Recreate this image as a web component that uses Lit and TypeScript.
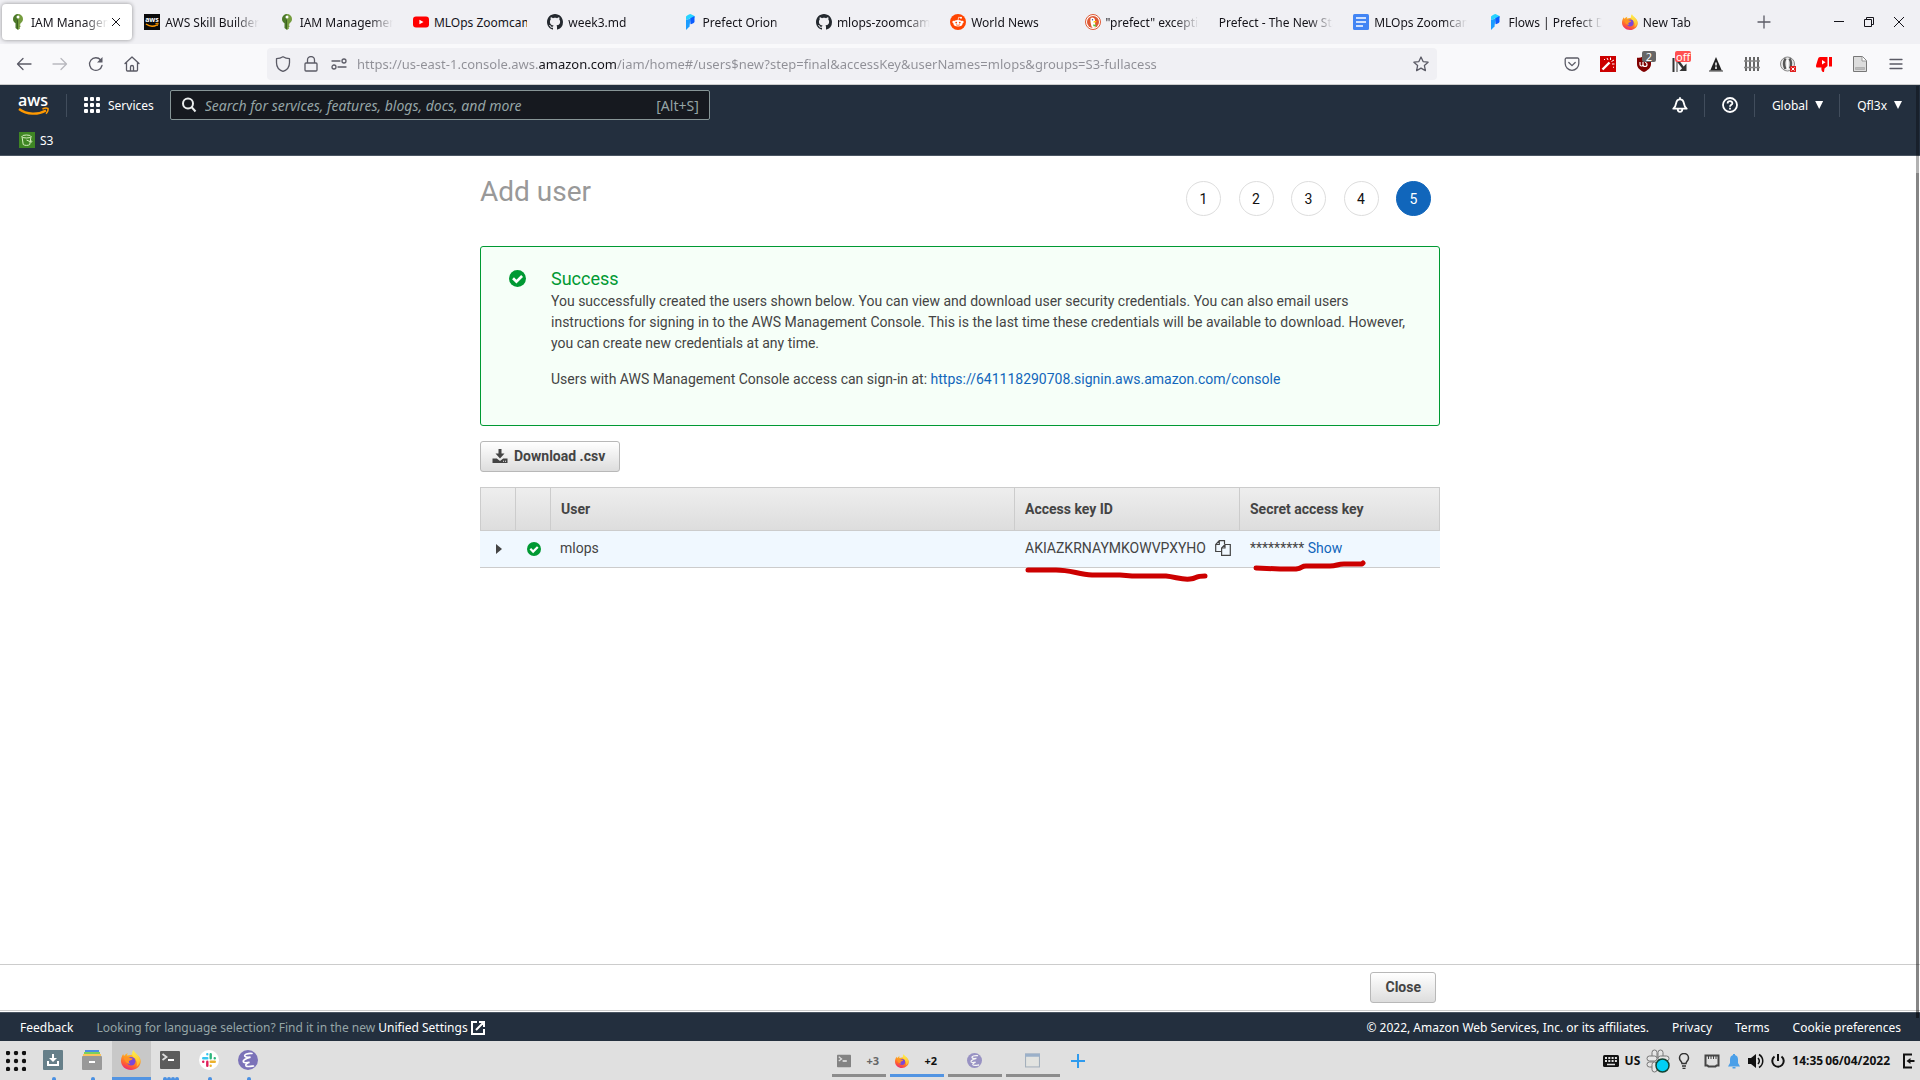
import { LitElement, html, css, svg, nothing, TemplateResult } from "lit";
import { customElement, state } from "lit/decorators.js";
import { classMap } from "lit/directives/class-map.js";

/* ---------- favicons ---------- */

const keyIcon = html`<svg class="i16" viewBox="0 0 16 16" aria-hidden="true">
  <path fill="#4d7a2a" d="M8 0a5 5 0 0 0-5 5c0 2 1 3.400 2.500 4.200V14L8 16z" />
  <path fill="#759c3e" d="M8 0a5 5 0 0 1 5 5c0 2-1 3.400-2.500 4.200v1l-1 .8 1 .8v1l-1 .8.700.7L8 16z" />
  <circle cx="8" cy="3" r="1.500" fill="#fff" />
  <path fill="#3c6020" d="M7 6h1v9H7z" />
</svg>`;

const awsIcon = html`<svg class="i16" viewBox="0 0 16 16" aria-hidden="true">
  <rect width="16" height="16" fill="#0b0b0b" />
  <text x="8" y="8" text-anchor="middle" font-family="Open Sans, sans-serif" font-weight="700" font-size="7" fill="#fff">aws</text>
  <path d="M2 10c3.500 2.600 8 2.600 11 .8" fill="none" stroke="#f90" stroke-width="1.500" />
  <path d="M11.500 9.500l2.700-.3-.8 2.600" fill="none" stroke="#f90" />
</svg>`;

const youtubeIcon = html`<svg class="i16" viewBox="0 0 16 16" aria-hidden="true">
  <rect y="2.500" width="16" height="11" rx="3" fill="#f00" />
  <path d="M6.400 5.700v4.600L10.500 8z" fill="#fff" />
</svg>`;

const githubIcon = html`<svg class="i16" viewBox="0 0 16 16" aria-hidden="true">
  <path fill="#24292f" d="M8 0C3.580 0 0 3.580 0 8c0 3.540 2.290 6.530 5.470 7.590.4.070.550-.170.550-.380 0-.190-.010-.820-.010-1.490-2.010.370-2.530-.490-2.690-.940-.090-.230-.480-.940-.820-1.130-.280-.150-.680-.520-.010-.530.630-.010 1.080.580 1.230.820.720 1.210 1.870.870 2.330.660.070-.520.280-.870.510-1.070-1.780-.2-3.640-.890-3.640-3.950 0-.870.310-1.590.820-2.150-.080-.2-.360-1.020.080-2.120 0 0 .670-.210 2.200.820.640-.180 1.320-.270 2-.270s1.360.090 2 .270c1.530-1.040 2.200-.820 2.200-.820.440 1.100.160 1.920.080 2.120.510.560.820 1.270.820 2.150 0 3.070-1.870 3.750-3.650 3.950.290.250.540.730.540 1.480 0 1.070-.010 1.930-.010 2.200 0 .210.150.460.550.380A8.010 8.010 0 0 0 16 8c0-4.420-3.580-8-8-8z" />
</svg>`;

const prefectIcon = html`<svg class="i16" viewBox="0 0 16 16" aria-hidden="true">
  <path fill="#27d3ff" d="M4 2.500C5.500 1 7.500 0 8.500 0l4 2v2L8 4.500 4 6z" />
  <path fill="#0b5dff" d="M8 4.500L12.500 2v6c-1 1.500-2.500 2-4 2.200z" />
  <path fill="#1b9cff" d="M4 6l4.500-1.500-1 8L4 16z" />
</svg>`;

const redditIcon = html`<svg class="i16" viewBox="0 0 16 16" aria-hidden="true">
  <circle cx="8" cy="8" r="8" fill="#ff4500" />
  <ellipse cx="8" cy="9.200" rx="4.600" ry="3.300" fill="#fff" />
  <circle cx="3.600" cy="7.900" r="1.200" fill="#fff" /><circle cx="12.400" cy="7.900" r="1.200" fill="#fff" />
  <circle cx="11" cy="3.700" r="1" fill="#fff" />
  <path d="M8 6.200l.7-3 2.300.5" fill="none" stroke="#fff" stroke-width=".7" />
  <circle cx="6.200" cy="8.600" r=".9" fill="#ff4500" /><circle cx="9.800" cy="8.600" r=".9" fill="#ff4500" />
  <path d="M6 10.600c1.200.9 2.800.9 4 0" fill="none" stroke="#ff4500" stroke-width=".7" />
</svg>`;

const duckIcon = html`<svg class="i16" viewBox="0 0 16 16" aria-hidden="true">
  <circle cx="8" cy="8" r="7.500" fill="#fff" stroke="#de5833" />
  <circle cx="8" cy="8" r="6" fill="#de5833" />
  <path d="M5.500 4.500c1-1.500 4-1.200 4.500 1.500.3 2-.2 5 .8 7.300-1.500.8-3 .7-3.800.2C6 11 5 7 5.500 4.500z" fill="#fff" />
  <path d="M8.500 7.500c1.500-.6 3-.5 3 0s-1.500.9-3 1.200z" fill="#fc0" />
  <path d="M8 10.500l3 .2v1.800l-2.500-.3z" fill="#5bc236" />
  <circle cx="7.500" cy="5.700" r=".7" fill="#2d4f8e" />
</svg>`;

const docsIcon = html`<svg class="i16" viewBox="0 0 16 16" aria-hidden="true">
  <rect width="16" height="16" rx="1.500" fill="#4285f4" />
  <path fill="#fff" d="M3 3.200h10v1.600H3zM3 7.200h10v1.600H3zM3 11.200h7v1.600H3z" />
</svg>`;

const firefoxIcon = html`<svg class="fill" viewBox="0 0 20 20" aria-hidden="true">
  <defs>
    <linearGradient id="ff-body" x1=".8" y1="0" x2=".3" y2="1">
      <stop offset="0" stop-color="#ffd53d" /><stop offset=".4" stop-color="#ff9a1f" />
      <stop offset=".75" stop-color="#ff5a36" /><stop offset="1" stop-color="#e8257c" />
    </linearGradient>
    <linearGradient id="ff-flame" x1="0" y1="0" x2="0" y2="1">
      <stop offset="0" stop-color="#fff04d" /><stop offset="1" stop-color="#ffb52a" />
    </linearGradient>
  </defs>
  <path fill="url(#ff-body)" d="M2.200 4c.2 1 .6 1.500 1 1.900C3.900 4.700 5.500 3.400 7 3.300 6.200 4 6 5 6.200 5.600L15 4c3 2 4.700 4 4.700 7.200C19.700 16 15.500 20 10 20S0 16 0 11C0 8.500.9 5.800 2.200 4z" />
  <path fill="url(#ff-flame)" d="M12.500 0c.6 3 6.500 5.200 6.500 10.500 0 3-1.600 5-3.600 6.200 1.200-3 .4-7-2.400-9C10.500 6 10.500 2.500 12.500 0z" />
  <circle cx="10.200" cy="11.300" r="4.300" fill="#7b48d8" />
  <path fill="#ff9423" d="M2.500 7.500c2-1.300 5-.8 6.200.3 1 .9 2.500.2 2.800.8.300 1-1.500 1.700-2.700 2-1.300.4-1.400 2.200.4 3-3 .6-5.500-1.800-6.700-6.100z" />
</svg>`;

/* ---------- toolbar icons ---------- */

const line = (d: string) => html`<svg class="i16 line" viewBox="0 0 16 16" aria-hidden="true"><path d=${d} /></svg>`;

const backIcon = line("M15 8H2M7 2.500L1.500 8 7 13.500");
const forwardIcon = line("M1 8h13M9 2.500L14.500 8 9 13.500");
const homeIcon = line("M1 7.500L8 1l7 6.500M2.500 6.500V14a1 1 0 0 0 1 1h9a1 1 0 0 0 1-1V6.500M6.500 15v-4a1.500 1.500 0 0 1 3 0v4");
const shieldIcon = line("M8 .7C6 2 4 2.600 1.500 2.700v4C1.500 11 4 14 8 15.400 12 14 14.500 11 14.500 6.700v-4C12 2.600 10 2 8 .7z");
const lockIcon = line("M3 7h10a1 1 0 0 1 1 1v6a1 1 0 0 1-1 1H3a1 1 0 0 1-1-1V8a1 1 0 0 1 1-1zM4.500 7V4a3.500 3.500 0 0 1 7 0v3");
const permsIcon = line("M1 5h8M15 11H7M11 5a2 2 0 1 0 4 0 2 2 0 1 0-4 0M1 11a2 2 0 1 0 4 0 2 2 0 1 0-4 0");
const starIcon = line("M8 1l2.100 4.600 5 .6-3.700 3.400 1 5L8 12.100l-4.400 2.500 1-5L.900 6.200l5-.6z");
const pocketIcon = line("M2.500 2h11a1.300 1.300 0 0 1 1.300 1.300V7.500a6.800 6.800 0 0 1-13.600 0V3.300A1.300 1.300 0 0 1 2.500 2zM4.800 6.500L8 9.600l3.200-3.100");
const menuIcon = line("M2 3.500h12M2 8h12M2 12.500h12");
const plusIcon = line("M8 2v12M2 8h12");
const minIcon = html`<svg class="i16 dark" viewBox="0 0 16 16" aria-hidden="true"><path d="M3 7.500h10" /></svg>`;
const restoreIcon = html`<svg class="i16 dark" viewBox="0 0 16 16" aria-hidden="true"><path d="M3.500 5.500h7v7h-7zM5.500 5.500v-2h7v7h-2" /></svg>`;
const closeIcon = html`<svg class="i16 dark" viewBox="0 0 16 16" aria-hidden="true"><path d="M3 3l10 10M13 3L3 13" /></svg>`;
const tabCloseIcon = html`<svg class="i16 dark" viewBox="0 0 16 16" aria-hidden="true"><path d="M4 4l8 8M12 4l-8 8" /></svg>`;

const reloadIcon = html`<svg class="i16 line" viewBox="0 0 16 16" aria-hidden="true">
  <path d="M14 9.500A6.300 6.300 0 1 1 12.700 4" /><path d="M14.500 1v5.500H9z" fill="#5b5b66" stroke="none" />
</svg>`;

const wandIcon = html`<svg class="i16" viewBox="0 0 16 16" aria-hidden="true">
  <rect width="16" height="16" fill="#c00" />
  <path d="M2.500 13.500l7-7" stroke="#fff" stroke-width="2.400" />
  <path d="M7 2l1 2M10.500 1.500v2.500M14 4l-2.500 1.500M12 8h2.500M4 3.500h1M13 11l1 .5" stroke="#fff" />
</svg>`;
const ublockIcon = html`<svg class="i16" viewBox="0 0 16 16" aria-hidden="true">
  <path fill="#800000" d="M8 0c2 1.300 4.500 1.800 7 1.800V8c0 4-3.500 6.500-7 8-3.500-1.500-7-4-7-8V1.800C3.500 1.800 6 1.300 8 0z" />
  <path d="M4 6v2.500a1.500 1.500 0 0 0 3 0V6M7 8.500a2 2 0 1 0 2-2" fill="none" stroke="#fff" stroke-width="1.200" />
</svg>`;
const arrowIcon = html`<svg class="i16" viewBox="0 0 16 16" aria-hidden="true">
  <path d="M1.500 2v14" stroke="#333" stroke-width="2" /><path d="M5 2v14" stroke="#999" stroke-width="2" />
  <path d="M6 5l6 8" fill="none" stroke="#333" stroke-width="2.400" /><path d="M14.500 7.500V15H7.500z" fill="#333" />
</svg>`;
const warnIcon = html`<svg class="i16" viewBox="0 0 16 16" aria-hidden="true">
  <path d="M8 1l6 14H2z" fill="#222" /><path d="M1 15h14" stroke="#777" stroke-width="1.500" />
  <path d="M8 6.500v3M8 10.500v2.500" stroke="#fff" stroke-width="1.500" />
</svg>`;
const fenceIcon = html`<svg class="i16" viewBox="0 0 16 16" aria-hidden="true">
  <path d="M2 1v14M6 1v14M10 1v14M14 1v14" stroke="#666" stroke-width="2" /><path d="M0 5h16M0 11.500h16" stroke="#888" stroke-width="1.300" />
</svg>`;
const maskIcon = html`<svg class="i16" viewBox="0 0 16 16" aria-hidden="true">
  <circle cx="7.500" cy="8" r="7" fill="#e8e8e8" stroke="#888" />
  <path d="M5.500 2.500C4 5 3 8 5.500 13M9.500 2.500c2 3 2 6 .5 10" fill="none" stroke="#555" stroke-width="2.400" />
  <path d="M7.500 4v9" stroke="#fff" stroke-width="1.500" />
  <rect x="10" y="10" width="6" height="6" fill="#e02020" /><path d="M11.500 11.500l3 3M14.500 11.500l-3 3" stroke="#fff" />
</svg>`;
const dislikeIcon = html`<svg class="i16" viewBox="0 0 16 16" aria-hidden="true">
  <path fill="#f00" d="M4 1h7.500v9L8.500 12.500 8 16c-2 0-3-1.500-2.500-4.500H1.500C0 11.500-.3 10 .3 8.500L2 3c.4-1.200 1-2 2-2zM13 1h3v9.500h-3z" />
  <path fill="#fff" d="M6 4v4.500L9.500 6.200z" />
</svg>`;
const pageIcon = html`<svg class="i16" viewBox="0 0 16 16" aria-hidden="true">
  <path d="M1.500.5h9l4 4v11h-13z" fill="#ddd" stroke="#777" /><path d="M10 .5v4.500h4.500" fill="#fff" stroke="#999" />
  <path d="M3.500 11.500h9v2h-9z" fill="#bbb" stroke="#999" stroke-width=".5" />
</svg>`;

/* ---------- console icons ---------- */

const gridIcon = html`<svg class="i16" viewBox="0 0 16 16" fill="#fff" aria-hidden="true">
  ${[0, 6, 12].map((y) => [0, 6, 12].map((x) => svg`<rect x=${x} y=${y} width="4" height="4" rx="1" />`))}
</svg>`;
const searchIcon = html`<svg class="i16" viewBox="0 0 16 16" fill="none" stroke="#eaeded" stroke-width="2" aria-hidden="true">
  <circle cx="7" cy="6.500" r="5" /><path d="M10.500 10l4 4.500" />
</svg>`;
const bellIcon = html`<svg class="i16" viewBox="0 0 16 16" fill="none" stroke="#fff" stroke-width="1.800" stroke-linejoin="round" aria-hidden="true">
  <path d="M8 .3v2M1.300 11.700C3.500 10 3.800 8.500 4.200 6 4.600 3.500 6 2.300 8 2.300s3.400 1.200 3.800 3.700c.4 2.500.7 4 2.900 5.700zM5.700 12c0 3.800 4.600 3.800 4.600 0" />
</svg>`;
const helpIcon = html`<svg class="i16" viewBox="0 0 16 16" fill="none" stroke="#fff" stroke-width="1.800" aria-hidden="true">
  <circle cx="8" cy="8" r="7" /><path d="M5.600 6.500C5.600 3.400 10.400 3.500 10.400 6.200 10.400 7.900 8 7.800 8 9.800M8 10.800v1.700" />
</svg>`;
const s3Icon = html`<svg class="i16" viewBox="0 0 16 16" fill="none" stroke="#d8f0c0" aria-hidden="true">
  <rect width="16" height="16" fill="#3f8624" stroke="none" />
  <ellipse cx="7.500" cy="4.500" rx="4.500" ry="1.500" /><path d="M3 4.500l1.200 8c1.500 1.200 5.200 1.200 6.600 0l1.200-8M7.500 8l4.500 2c1.500.5 1-1-.5-2" />
</svg>`;
const checkIcon = html`<svg class="fill" viewBox="0 0 16 16" aria-hidden="true">
  <circle cx="8" cy="8" r="8" fill="#093" /><path d="M3.800 7.800L7 11l5.300-5.300" fill="none" stroke="#fff" stroke-width="2.500" />
</svg>`;
const downloadIcon = html`<svg class="i16" viewBox="0 0 16 16" aria-hidden="true">
  <path fill="#444" d="M6.500 0h3v4.500h3L8 9.500 3.500 4.500h3zM.500 9.500h4.300L8 12l3.200-2.500h4.300V14H.500z" />
  <path fill="#eee" d="M11 11.800h1v1h-1zM13 11.800h1v1h-1z" />
</svg>`;
const copyIcon = html`<svg class="i16" viewBox="0 0 16 16" fill="none" stroke="#444" stroke-width="1.200" aria-hidden="true">
  <path d="M6.500 11.500H.700v-7L4.300.700h5.200V4M.700 4.500h3.600V.700" /><path d="M10 4.500h5.300v10.800H6.600V8zM6.600 8H10V4.500" />
</svg>`;
const externalIcon = html`<svg class="fill" viewBox="0 0 14 14" fill="none" stroke="#fff" stroke-width="2" aria-hidden="true">
  <path d="M6 1H1v12h12V8M8 1h5v5M13 1L5 9" />
</svg>`;

/* ---------- desktop panel icons ---------- */

const trayDownload = html`<svg class="fill" viewBox="0 0 20 20" aria-hidden="true">
  <rect width="20" height="20" rx="1" fill="#667f89" /><path d="M9 4h2v4h3l-4 4-4-4h3zM4 11h2v3h8v-3h2v5H4z" fill="#fff" />
</svg>`;
const filesIcon = html`<svg class="fill" viewBox="0 0 20 20" aria-hidden="true">
  <path d="M3 0h14v3H3z" fill="#4a90e2" /><path d="M2 2h16v3H2z" fill="#7dd05a" /><path d="M1 4h18v4H1z" fill="#fbc55c" />
  <rect y="6" width="20" height="14" rx="1" fill="#999" /><path d="M7 11h6v2H7z" fill="#fff" />
</svg>`;
const terminalIcon = html`<svg class="fill" viewBox="0 0 20 20" aria-hidden="true">
  <rect y="1" width="20" height="18" rx="1" fill="#5c5c5c" />
  <path d="M2.500 4l4 3-4 3" fill="none" stroke="#ddd" stroke-width="1.800" /><path d="M8 9h6v2H8z" fill="#fff" />
</svg>`;
const slackIcon = html`<svg class="fill" viewBox="0 0 20 20" fill="none" stroke-width="2.400" stroke-linecap="round" aria-hidden="true">
  <circle cx="10" cy="10" r="10" fill="#fff" />
  <path stroke="#36c5f0" d="M8.300 4.200v.1M4.200 8.300h4.100" /><path stroke="#2eb67d" d="M11.700 4.200v4.100M15.800 8.300h-.1" />
  <path stroke="#ecb22e" d="M11.700 15.800v-.1M15.800 11.700h-4.100" /><path stroke="#e01e5a" d="M8.300 15.800v-4.100M4.200 11.700h.1" />
</svg>`;
const emacsIcon = html`<svg class="fill" viewBox="0 0 20 20" aria-hidden="true">
  <circle cx="10" cy="10" r="10" fill="#7b72b8" />
  <path d="M14 3.500C10 3 6 4.500 6.800 6.200c.7 1.300 3.200 1.300 5.700 1C8.500 8.500 4.500 10 5.500 12c.8 1.200 3.500.8 6 .3-2.500 1-4.500 2.200-3.500 3.500 1.200 1.300 4.500.6 7.500.2" fill="none" stroke="#fff" stroke-width="1.700" stroke-linecap="round" />
</svg>`;
const windowIcon = html`<svg class="fill" viewBox="0 0 14 14" aria-hidden="true">
  <rect x=".5" y="1" width="13" height="12" fill="#e4e5e0" stroke="#8c9cae" /><path d="M0 .5h14v3H0z" fill="#7f9dc0" />
</svg>`;
const addIcon = html`<svg class="fill" viewBox="0 0 14 14" aria-hidden="true"><path d="M7 0v14M0 7h14" stroke="#2f9bee" stroke-width="2" /></svg>`;
const keyboardIcon = html`<svg class="i16" viewBox="0 0 16 16" aria-hidden="true">
  <rect y="2" width="16" height="12" rx="1.500" fill="#111" />
  <path d="M2 5h12M2 8h12" stroke="#e0e0e0" stroke-width="2" stroke-dasharray="2 1.300" /><path d="M4 11.500h8" stroke="#e0e0e0" stroke-width="1.500" />
</svg>`;
const slackTray = html`<svg class="fill" viewBox="0 0 24 24" aria-hidden="true">
  <g fill="#e6e6e6" stroke="#777">
    <rect x="6" y="1" width="5" height="10" rx="2.500" /><rect x="12" y="1" width="5" height="10" rx="2.500" />
    <rect x="1" y="7" width="10" height="5" rx="2.500" /><rect x="12" y="7" width="11" height="5" rx="2.500" />
    <rect x="1" y="13" width="10" height="5" rx="2.500" /><rect x="6" y="13" width="5" height="10" rx="2.500" />
  </g>
  <circle cx="16.500" cy="16.500" r="6.500" fill="#00d0f5" stroke="#143" stroke-width="1.500" />
</svg>`;
const bulbIcon = html`<svg class="i16" viewBox="0 0 16 16" fill="none" stroke="#333" stroke-width="1.500" aria-hidden="true">
  <path d="M6 10.500C6 8.500 3.500 8 3.500 5a4.500 4.500 0 0 1 9 0c0 3-2.500 3.500-2.500 5.500zM6 13h4M6.500 15.500h3" />
</svg>`;
const netIcon = html`<svg class="i16" viewBox="0 0 16 16" fill="none" stroke="#444" stroke-width="2" aria-hidden="true">
  <path d="M1.500 2.500h13v10h-2l-1 1h-7l-1-1h-2z" /><path d="M4.500 3v3M7 3v3M9.500 3v3M12 3v3" stroke-width="1" />
</svg>`;
const trayBell = html`<svg class="i16" viewBox="0 0 16 16" aria-hidden="true">
  <path fill="#4a9fe8" d="M7 1h2v1c2 .6 3 2.200 3 4.500V10l2 3.500H2L4 10V6.500C4 4.200 5 2.600 7 2zM6.500 14h3v1.500h-3z" />
</svg>`;
const volumeIcon = html`<svg class="i16" viewBox="0 0 16 16" aria-hidden="true">
  <path fill="#111" d="M0 5h3l5-4v14l-5-4H0z" /><path d="M10 5c1.500 1.700 1.500 4.300 0 6M11 1.500c5 3 5 10 0 13" fill="none" stroke="#111" stroke-width="1.500" />
</svg>`;
const powerIcon = html`<svg class="i16" viewBox="0 0 16 16" fill="none" stroke="#111" stroke-width="2" aria-hidden="true">
  <path d="M4.500 3.500a5.700 5.700 0 1 0 7 0M8 1v7" />
</svg>`;
const exitIcon = html`<svg class="i16" viewBox="0 0 16 16" fill="none" stroke="#111" stroke-width="2" aria-hidden="true">
  <path d="M12 1.500H4v13h8M14.500 8H9" /><path d="M6.500 8l4-3v6z" fill="#111" stroke="none" />
</svg>`;

interface Tab { title: string; icon?: TemplateResult; clip?: boolean }
interface Extension { label: string; icon: TemplateResult; badge?: string; alert?: boolean }
interface Launcher { label: string; icon: TemplateResult; windows: number; active?: boolean }
interface TaskGroup { label: string; icon: TemplateResult; more?: string; active?: boolean }
interface Credential { user: string; keyId: string; secret: string }

const tabs: Tab[] = [
  { title: "IAM Management Console", icon: keyIcon },
  { title: "AWS Skill Builder", icon: awsIcon },
  { title: "IAM Management Console", icon: keyIcon },
  { title: "MLOps Zoomcamp", icon: youtubeIcon, clip: true },
  { title: "week3.md", icon: githubIcon },
  { title: "Prefect Orion", icon: prefectIcon },
  { title: "mlops-zoomcamp", icon: githubIcon },
  { title: "World News", icon: redditIcon },
  { title: "\"prefect\" exception", icon: duckIcon },
  { title: "Prefect - The New Standard" },
  { title: "MLOps Zoomcamp", icon: docsIcon },
  { title: "Flows | Prefect Docs", icon: prefectIcon },
  { title: "New Tab", icon: firefoxIcon },
];

const extensions: Extension[] = [
  { label: "Save to Pocket", icon: pocketIcon },
  { label: "Wand", icon: wandIcon },
  { label: "Content blocker", icon: ublockIcon, badge: "2" },
  { label: "Redirects", icon: arrowIcon, badge: "off", alert: true },
  { label: "Warnings", icon: warnIcon },
  { label: "Fence", icon: fenceIcon },
  { label: "Mask", icon: maskIcon },
  { label: "Dislikes", icon: dislikeIcon },
  { label: "Page", icon: pageIcon },
  { label: "Menu", icon: menuIcon },
];

const launchers: Launcher[] = [
  { label: "Downloads", icon: trayDownload, windows: 1 },
  { label: "Files", icon: filesIcon, windows: 1 },
  { label: "Firefox", icon: firefoxIcon, windows: 0, active: true },
  { label: "Terminal", icon: terminalIcon, windows: 4 },
  { label: "Slack", icon: slackIcon, windows: 1 },
  { label: "Emacs", icon: emacsIcon, windows: 1 },
];

const groups: TaskGroup[] = [
  { label: "Terminal windows", icon: terminalIcon, more: "+3" },
  { label: "Firefox windows", icon: firefoxIcon, more: "+2", active: true },
  { label: "Emacs windows", icon: emacsIcon },
  { label: "Other windows", icon: windowIcon },
];

const credentials: Credential[] = [{ user: "mlops", keyId: "AKIAZKRNAYMKOWVPXYHO", secret: "*********" }];

const shared = css`
  * { box-sizing: border-box; }
  :host { display: block; }
  button { font: inherit; color: inherit; background: none; border: 0; padding: 0; margin: 0; cursor: pointer; }
  a { color: inherit; text-decoration: none; }
  svg { display: block; flex: none; }
  .i16 { width: 16px; height: 16px; }
  .fill { width: 100%; height: 100%; }
`;

/* ---------- browser window chrome ---------- */

@customElement("browser-chrome")
class BrowserChrome extends LitElement {
  static styles = [shared, css`
    :host { font: 12px/16px "Noto Sans", sans-serif; color: #15141a; border-bottom: 1px solid #ccc; }
    .line { fill: none; stroke: #5b5b66; stroke-width: 1.3; stroke-linecap: round; stroke-linejoin: round; }
    .dark { fill: none; stroke: #15141a; stroke-width: 1; }
    .strip { display: flex; align-items: center; height: 44px; background: #f0f0f4; padding-right: 6px; }
    .tabs { display: flex; flex: 1; min-width: 0; height: 100%; }
    .tab { display: flex; flex: 1 1 0; min-width: 0; align-items: center; margin: 4px 2px; padding: 0 8px; border-radius: 4px; }
    .tab.active { background: #fff; box-shadow: 0 0 4px rgba(0, 0, 0, 0.4); }
    .open { display: flex; flex: 1; min-width: 0; align-items: center; gap: 5px; text-align: left; }
    .favicon { width: 16px; height: 16px; flex: none; }
    .title { flex: 1; min-width: 0; padding-top: 1px; overflow: hidden; white-space: nowrap; mask-image: linear-gradient(to left, transparent, #000 24px); }
    .title.clip { mask-image: none; }
    .window { display: flex; align-items: center; }
    .window button { width: 30px; display: grid; place-items: center; }
    .window .new { width: 36px; margin-right: 42px; }
    .toolbar { display: flex; align-items: center; height: 40px; padding: 0 6px; background: #f9f9fb; }
    .tool { position: relative; width: 36px; height: 32px; display: grid; place-items: center; }
    .tool:disabled { opacity: 0.4; }
    .address { display: flex; flex: 1; align-items: center; margin: 0 117px; height: 32px; padding: 0 8px; gap: 10px; background: #f0f0f4; border-radius: 4px; }
    .identity { display: flex; gap: 12px; }
    .url {
      flex: 1; min-width: 0; border: 0; outline: 0; padding: 0; font: 13px/20px "Noto Sans", sans-serif; color: transparent;
      background: linear-gradient(to right, #8f8f96 181px, #15141a 181px, #15141a 260px, #8f8f96 260px); background-clip: text; -webkit-background-clip: text;
    }
    .badge { position: absolute; left: 16px; top: 3px; min-width: 14px; padding: 0 1px; background: #666; color: #fff; font-size: 11px; line-height: 11px; border-radius: 2px; }
    .badge.alert { left: 13px; background: #ff5050; }
  `];

  @state() private active = 0;

  render() {
    return html`
      <div class="strip">
        <div class="tabs">
          ${tabs.map((t, i) => html`
            <div class=${classMap({ tab: true, active: i === this.active })}>
              <button class="open" @click=${() => (this.active = i)}>
                ${t.icon ? html`<span class="favicon">${t.icon}</span>` : nothing}
                <span class=${classMap({ title: true, clip: !!t.clip })}>${t.title}</span>
              </button>
              ${i === this.active ? html`<button class="close" aria-label="Close tab">${tabCloseIcon}</button>` : nothing}
            </div>`)}
        </div>
        <div class="window">
          <button class="new" aria-label="New tab">${plusIcon}</button>
          <button aria-label="Minimize">${minIcon}</button>
          <button aria-label="Restore">${restoreIcon}</button>
          <button aria-label="Close window">${closeIcon}</button>
        </div>
      </div>
      <div class="toolbar">
        <button class="tool" aria-label="Back">${backIcon}</button>
        <button class="tool" aria-label="Forward" disabled>${forwardIcon}</button>
        <button class="tool" aria-label="Reload">${reloadIcon}</button>
        <button class="tool" aria-label="Home">${homeIcon}</button>
        <div class="address">
          <span class="identity">${shieldIcon}${lockIcon}${permsIcon}</span>
          <input class="url" type="text" aria-label="Address" spellcheck="false"
            .value=${"https://us-east-1.console.aws.amazon.com/iam/home#/users$new?step=final&accessKey&userNames=mlops&groups=S3-fullacess"} />
          <button aria-label="Bookmark">${starIcon}</button>
        </div>
        ${extensions.map((e) => html`
          <button class="tool" aria-label=${e.label}>
            ${e.icon}
            ${e.badge ? html`<span class=${classMap({ badge: true, alert: !!e.alert })}>${e.badge}</span>` : nothing}
          </button>`)}
      </div>`;
  }
}

/* ---------- console header ---------- */

@customElement("console-header")
class ConsoleHeader extends LitElement {
  static styles = [shared, css`
    :host { background: #232f3e; color: #fff; font: 12px/16px "Noto Sans", sans-serif; border-bottom: 1px solid #4a5562; }
    .row { display: flex; align-items: center; height: 40px; padding: 0 18px; }
    .logo { width: 32px; height: 24px; }
    .rule { width: 1px; height: 23px; background: #414d5c; margin: 0 17px 0 16px; }
    .item { display: flex; align-items: center; gap: 8px; }
    .item span, .pin span { padding-top: 1px; }
    .search { display: flex; align-items: center; flex: 0 1 540px; height: 30px; margin-left: 16px; padding: 0 10px; gap: 8px; border: 1px solid #879596; border-radius: 2px; background: #16191f; color: #95a5a6; font-size: 14px; }
    .search span { padding-top: 2px; }
    .field { flex: 1; min-width: 0; border: 0; outline: 0; padding: 2px 0 0; background: none; color: #fff; font: 14px/20px "Noto Sans", sans-serif; }
    .field::placeholder { color: #95a5a6; font-style: italic; opacity: 1; }
    .right { display: flex; align-items: center; margin-left: auto; }
    .item .arrow { width: 8px; height: 8px; padding: 0; background: #fff; clip-path: polygon(0 0, 100% 0, 50% 100%); }
    .right .item { gap: 7px; }
    .pins { display: flex; align-items: center; height: 30px; padding: 0 19px; }
    .pin { display: flex; align-items: center; gap: 5px; }
  `];

  render() {
    return html`
      <div class="row">
        <a href="#home" aria-label="AWS home">
          <svg class="logo" viewBox="0 0 32 24" aria-hidden="true">
            <text x="15" y="13" text-anchor="middle" font-family="Open Sans, sans-serif" font-weight="600" font-size="16" fill="#fff">aws</text>
            <path d="M1 16c8 6 19 6 27 1.500" fill="none" stroke="#f90" stroke-width="2.200" />
            <path d="M24.500 16c2-1 4.500-1 5.500-.5.300 1.500-.5 3.800-2 5.200" fill="none" stroke="#f90" stroke-width="1.500" />
          </svg>
        </a>
        <span class="rule"></span>
        <button class="item">${gridIcon}<span>Services</span></button>
        <label class="search">
          ${searchIcon}
          <input class="field" type="search" aria-label="Search" placeholder="Search for services, features, blogs, docs, and more" />
          <span>[Alt+S]</span>
        </label>
        <div class="right">
          <button class="item" aria-label="Notifications">${bellIcon}</button>
          <span class="rule"></span>
          <button class="item" aria-label="Help">${helpIcon}</button>
          <span class="rule"></span>
          <button class="item"><span>Global</span><span class="arrow"></span></button>
          <span class="rule"></span>
          <button class="item"><span>Qfl3x</span><span class="arrow"></span></button>
        </div>
      </div>
      <div class="pins"><a class="pin" href="#s3">${s3Icon}<span>S3</span></a></div>`;
  }
}

/* ---------- last step of the wizard ---------- */

@customElement("add-user-page")
class AddUserPage extends LitElement {
  static styles = [shared, css`
    :host { display: flex; flex-direction: column; flex: 1; background: #fff; color: #444; font: 14px/21px Roboto, sans-serif; }
    .content { flex: 1; width: 100%; max-width: 960px; margin: 0 auto; padding-top: 18px; }
    .head { display: flex; justify-content: space-between; align-items: flex-start; padding-right: 9px; margin-bottom: 30px; }
    h1 { margin: 0; font-size: 28px; line-height: 36px; font-weight: 400; color: #999; }
    .steps { display: flex; justify-content: space-between; width: 245px; margin: 7px 0 0; padding: 0; list-style: none; }
    .step { width: 35px; height: 35px; padding-top: 1px; border: 1px solid #ddd; border-radius: 50%; display: grid; place-items: center; color: #111; }
    .step.current { background: #1166bb; border-color: #1166bb; color: #fff; }
    .notice { display: flex; gap: 25px; padding: 20px 28px 35px; border: 1px solid #093; border-radius: 3px; background: #f6fff8; }
    .notice-icon { width: 17px; height: 17px; margin-top: 3px; flex: none; }
    h2 { margin: 0; font-size: 18px; line-height: 24px; font-weight: 400; color: #093; }
    p { margin: 0 0 15px; }
    p:last-child { margin: 0; }
    .link { color: #1166bb; }
    .btn { display: inline-flex; align-items: center; gap: 6px; height: 31px; padding: 0 14px; border: 1px solid #b8b8b8; border-radius: 3px; background: linear-gradient(#fff, #ddd); color: #444; font-weight: 700; }
    .download { margin: 15px 0; padding-left: 11px; }
    .results { position: relative; }
    table { width: 100%; table-layout: fixed; border-collapse: separate; border-spacing: 0; }
    .narrow { width: 35px; }
    .key { width: 225px; }
    .secret { width: 201px; }
    th { height: 44px; padding: 0 10px; text-align: left; font-weight: 700; border: 1px solid #ccc; border-right-width: 0; background: linear-gradient(#eee, #ddd); }
    th:last-child { border-right-width: 1px; }
    td { height: 37px; padding: 0 10px 2px; background: #f0f8ff; border-bottom: 1px solid #ccc; }
    td.tight { padding: 0; }
    .expand { display: block; width: 6px; height: 10px; margin-left: 16px; background: #444; clip-path: polygon(0 0, 100% 50%, 0 100%); }
    .status { display: block; width: 14px; height: 14px; margin-left: 12px; }
    .copyable { display: flex; align-items: center; gap: 9px; padding-left: 1px; }
    .masked { padding-left: 1px; }
    .marks { position: absolute; left: 0; top: 0; width: 100%; height: 96px; pointer-events: none; }
    .actions { border-top: 1px solid #ccc; border-bottom: 1px solid #ccc; margin-bottom: 1px; }
    .inner { display: flex; justify-content: flex-end; max-width: 960px; margin: 0 auto; padding: 7px 4px; }
  `];

  @state() private shown = false;

  render() {
    return html`
      <main class="content">
        <div class="head">
          <h1>Add user</h1>
          <ol class="steps">
            ${[1, 2, 3, 4, 5].map((n) => html`<li class=${classMap({ step: true, current: n === 5 })}>${n}</li>`)}
          </ol>
        </div>
        <section class="notice">
          <span class="notice-icon">${checkIcon}</span>
          <div>
            <h2>Success</h2>
            <p>You successfully created the users shown below. You can view and download user security credentials. You can also email users instructions for signing in to the AWS Management Console. This is the last time these credentials will be available to download. However, you can create new credentials at any time.</p>
            <p>Users with AWS Management Console access can sign-in at: <a class="link" href="#signin">https://641118290708.signin.aws.amazon.com/console</a></p>
          </div>
        </section>
        <button class="btn download">${downloadIcon}Download .csv</button>
        <div class="results">
          <table>
            <colgroup><col class="narrow" /><col class="narrow" /><col /><col class="key" /><col class="secret" /></colgroup>
            <thead><tr><th></th><th></th><th>User</th><th>Access key ID</th><th>Secret access key</th></tr></thead>
            <tbody>
              ${credentials.map((c) => html`
                <tr>
                  <td class="tight"><button class="expand" aria-label="Expand row"></button></td>
                  <td class="tight"><span class="status">${checkIcon}</span></td>
                  <td>${c.user}</td>
                  <td><span class="copyable">${c.keyId}<button aria-label="Copy">${copyIcon}</button></span></td>
                  <td><span class="masked">${c.secret} <button class="link" @click=${() => (this.shown = !this.shown)}>${this.shown ? "Hide" : "Show"}</button></span></td>
                </tr>`)}
            </tbody>
          </table>
          <svg class="marks" viewBox="0 0 960 96" preserveAspectRatio="xMaxYMin" fill="none" stroke="#c00" stroke-width="5" stroke-linecap="round" stroke-linejoin="round" aria-hidden="true">
            <path d="M548 83h28c14 0 22 4 36 5h28l12 1h34c10 1 16 4 24 3 8-1 4-3 15-3" />
            <path d="M776 81l24 1h16c7-1 5-3 10-3h24c7 0 7-2 14-2h18l1-1" />
          </svg>
        </div>
      </main>
      <div class="actions"><div class="inner"><button class="btn">Close</button></div></div>`;
  }
}

/* ---------- console footer ---------- */

@customElement("console-footer")
class ConsoleFooter extends LitElement {
  static styles = [shared, css`
    :host { background: #232f3e; color: #fff; font: 12px/16px "Noto Sans", sans-serif; border-top: 1px solid #4a5562; }
    .bar { display: flex; align-items: center; justify-content: space-between; height: 28px; padding: 2px 19px 0 20px; }
    .side { display: flex; align-items: center; gap: 23px; }
    .hint { display: flex; align-items: center; gap: 3px; color: #95a5a6; }
    .hint a { display: flex; align-items: center; gap: 3px; color: #fff; }
    .external { width: 14px; height: 14px; }
  `];

  render() {
    return html`
      <footer class="bar">
        <div class="side">
          <a href="#feedback">Feedback</a>
          <span class="hint">Looking for language selection? Find it in the new
            <a href="#settings">Unified Settings<span class="external">${externalIcon}</span></a></span>
        </div>
        <div class="side">
          <span>© 2022, Amazon Web Services, Inc. or its affiliates.</span>
          <a href="#privacy">Privacy</a><a href="#terms">Terms</a><a href="#cookies">Cookie preferences</a>
        </div>
      </footer>`;
  }
}

/* ---------- desktop panel ---------- */

@customElement("desktop-panel")
class DesktopPanel extends LitElement {
  static styles = [shared, css`
    :host { background: #e0e0e0; color: #111; font: bold 12px/16px "Noto Sans", sans-serif; }
    .panel { display: grid; grid-template-columns: 1fr auto 1fr; height: 39px; }
    .launchers, .groups, .tray, .clock { display: flex; align-items: center; }
    .apps { width: 34px; padding-left: 6px; }
    .apps svg, .glyph { width: 20px; height: 20px; }
    .launcher { display: grid; grid-template-rows: 1fr 3px; justify-items: center; align-items: center; width: 39px; height: 39px; }
    .glyph { margin: 2px 1px 0 0; }
    .launcher.active { background: #c8c8c8; }
    .dots { display: flex; align-self: stretch; }
    .dots i { width: 4px; height: 3px; border-radius: 2px 2px 0 0; background: #4a90e2; }
    .launcher.active .dots { justify-self: stretch; background: #5294e2; }
    .groups { gap: 4px; }
    .group { display: flex; align-items: center; justify-content: space-between; width: 54px; height: 33px; padding: 3px 7px 0 5px; border-bottom: 3px solid #8c8c8c; }
    .group.single { justify-content: center; }
    .group.active { border-color: #5294e2; }
    .mini { width: 14px; height: 14px; opacity: 0.7; }
    .active .mini { opacity: 1; }
    .single .mini { width: 15px; height: 15px; }
    .more { color: #666; font-size: 11px; }
    .active .more { color: #111; }
    .add { width: 14px; height: 14px; margin: 0 3px 0 7px; }
    .tray { justify-content: flex-end; padding-right: 4px; gap: 6px; }
    .big { width: 24px; height: 24px; }
    .bulb { margin-right: 6px; }
    .clock { gap: 2px; margin-right: 4px; }
  `];

  render() {
    return html`
      <footer class="panel">
        <div class="launchers">
          <button class="apps" aria-label="Applications">
            <svg viewBox="0 0 20 20" fill="#111" aria-hidden="true">
              ${[2, 10, 18].map((y) => [2, 10, 18].map((x) => svg`<circle cx=${x} cy=${y} r="2.200" />`))}
            </svg>
          </button>
          ${launchers.map((l) => html`
            <button class=${classMap({ launcher: true, active: !!l.active })} aria-label=${l.label}>
              <span class="glyph">${l.icon}</span>
              <span class="dots">${Array.from({ length: l.windows }, () => html`<i></i>`)}</span>
            </button>`)}
        </div>
        <div class="groups">
          ${groups.map((g) => html`
            <button class=${classMap({ group: true, active: !!g.active, single: !g.more })} aria-label=${g.label}>
              <span class="mini">${g.icon}</span>
              ${g.more ? html`<span class="more">${g.more}</span>` : nothing}
            </button>`)}
          <button class="add" aria-label="Add workspace">${addIcon}</button>
        </div>
        <div class="tray">
          ${keyboardIcon}<span>US</span><span class="big">${slackTray}</span>
          <span class="bulb">${bulbIcon}</span>${netIcon}${trayBell}${volumeIcon}${powerIcon}
          <span class="clock"><span>14:35</span><span>06/04/2022</span></span>${exitIcon}
        </div>
      </footer>`;
  }
}

@customElement("app-root")
class AppRoot extends LitElement {
  static styles = [shared, css`
    :host { display: flex; flex-direction: column; min-height: 100vh; background: #fff; }
    .page { position: relative; display: flex; flex-direction: column; flex: 1; }
    .track { position: absolute; right: 1px; top: 1px; bottom: 23px; width: 3px; padding-top: 87px; background: rgba(0, 0, 0, 0.3); }
    .thumb { height: 100%; background: rgba(0, 0, 0, 0.25); }
  `];

  render() {
    return html`
      <browser-chrome></browser-chrome>
      <div class="page">
        <console-header></console-header>
        <add-user-page></add-user-page>
        <console-footer></console-footer>
        <div class="track"><div class="thumb"></div></div>
      </div>
      <desktop-panel></desktop-panel>`;
  }
}
